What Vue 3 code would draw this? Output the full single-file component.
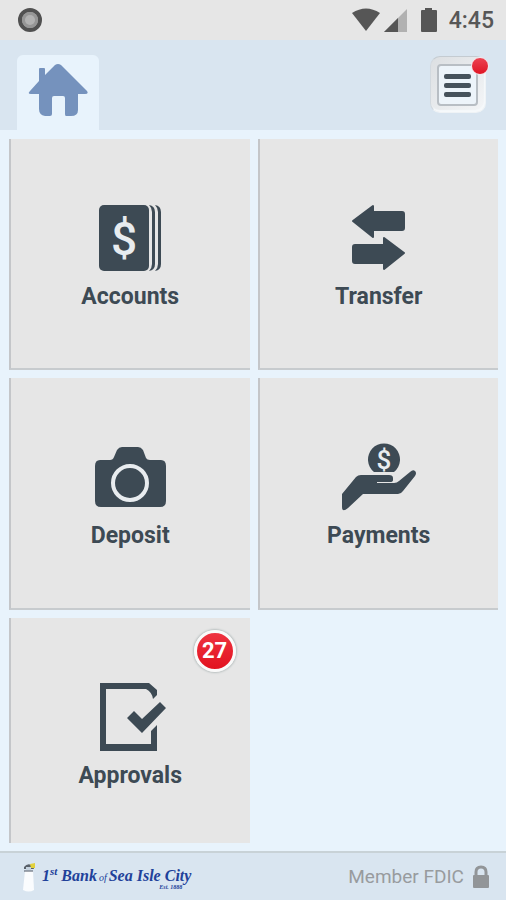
<script setup>
const tiles = [
  { id: 'accounts', label: 'Accounts' },
  { id: 'transfer', label: 'Transfer' },
  { id: 'deposit', label: 'Deposit' },
  { id: 'payments', label: 'Payments' },
  { id: 'approvals', label: 'Approvals', badge: 27 },
]
</script>

<template>
  <div class="page">
    <div class="status">
      <svg width="26" height="26" viewBox="0 0 26 26" aria-hidden="true">
        <circle cx="13" cy="13" r="10" fill="#aaa" stroke="#515151" stroke-width="4" />
        <circle cx="13" cy="13" r="8" fill="#969696" />
        <circle cx="13" cy="13" r="5" fill="#b2b2b2" />
      </svg>
      <div class="status-right">
        <svg width="88" height="26" viewBox="0 0 88 26" aria-hidden="true">
          <path d="M1 6Q15-3 29 6L15 24Z" fill="#565656" />
          <path d="M56 2V25H33Z" fill="#b1b1b1" />
          <path d="M47 11V25H33Z" fill="#565656" />
          <path d="M74 1h7v2h4q1 0 1 1v20q0 1-1 1H71q-1 0-1-1V4q0-1 1-1h3z" fill="#565656" />
        </svg>
        <span class="time">4:45</span>
      </div>
    </div>

    <header class="header">
      <a class="home" href="#" aria-label="Home">
        <svg width="60" height="54" viewBox="0 0 60 54" aria-hidden="true">
          <path d="M27 2Q30 0 33 2L59 28Q61 31 57 31H50V47Q50 53 43 53H38Q37 53 37 51V35Q37 33 35 33H26Q24 33 24 35V51Q24 53 22 53H17Q11 52 11 46V31H3Q-1 31 2 28L11 18V6Q11 5 12 5H16Q17 5 17 6V12Z" fill="#7592bd" />
        </svg>
      </a>
      <button class="menu" type="button" aria-label="Menu">
        <span class="menu-face">
          <span class="bar"></span>
          <span class="bar"></span>
          <span class="bar"></span>
        </span>
        <span class="dot"></span>
      </button>
    </header>

    <main class="grid">
      <button v-for="tile in tiles" :key="tile.id" class="tile" type="button">
        <svg class="icon" viewBox="0 0 80 72" aria-hidden="true">
          <g v-if="tile.id === 'accounts'">
            <rect x="9" y="2" width="50" height="66" rx="5" />
            <path d="M59 2Q65 3 65 9V61Q65 67 59 68Q62 65 62 61V9Q62 5 59 2Z" />
            <path d="M65 2Q71 3 71 9V61Q71 67 65 68Q68 65 68 61V9Q68 5 65 2Z" />
            <text class="dollar" x="34" y="52" font-size="46">$</text>
          </g>
          <g v-else-if="tile.id === 'transfer'" stroke="#3d4a54" stroke-width="2" stroke-linejoin="round">
            <path d="M14 18L34 3V9H63Q65 9 65 11V25Q65 27 63 27H34V34Z" />
            <path d="M65 50L45 66V60H16Q14 60 14 58V44Q14 42 16 42H45V35Z" />
          </g>
          <g v-else-if="tile.id === 'deposit'">
            <path d="M10 18H20Q23 18 24 15L27 8Q29 5 32 5H48Q51 5 53 8L56 16Q57 18 60 18H71Q76 18 76 24V59Q76 65 70 65H11Q5 65 5 59V24Q5 18 10 18Z" />
            <circle cx="40" cy="41" r="17" fill="none" stroke="#e8ecef" stroke-width="4" />
          </g>
          <g v-else-if="tile.id === 'payments'">
            <path d="M35 30A16 16 0 1 1 55 30Z" />
            <text class="dollar" x="45" y="27" font-size="26">$</text>
            <path d="M3 52L17 35Q19 33 22 33H50Q54 33 54 36V38Q54 40 51 40H38V41H55Q58 41 60 39L71 30Q74 27 76 29Q78 31 76 34L64 49Q62 52 59 52H24L9 66Q3 71 3 65Z" />
          </g>
          <g v-else>
            <path d="M10 1H59L67 8V13L63 17Q62 10 56 7H16V62H61V49L67 43V69H10Z" />
            <path d="M37 36L44 29L52 37L70 20L76 26L52 51Z" />
          </g>
        </svg>
        <span class="label">{{ tile.label }}</span>
        <span v-if="tile.badge" class="badge">{{ tile.badge }}</span>
      </button>
    </main>

    <footer class="footer">
      <div class="brand">
        <svg width="14" height="30" viewBox="0 0 14 30" aria-hidden="true">
          <path d="M3 9H11L12 28Q7 31 1 28Z" fill="#fafcfe" />
          <path d="M2 5Q6 0 11 4L12 7H2Z" fill="#59616a" />
          <path d="M8 2L13 1V6H9Z" fill="#e2d13c" />
          <path d="M4 5H9V8H4Z" fill="#c6d3df" />
          <path d="M2 9H11" stroke="#4a5361" stroke-width="1" />
        </svg>
        <span class="brand-name">1<sup>st</sup> Bank<span class="of">of</span>Sea Isle City<small class="est">Est. 1888</small></span>
      </div>
      <div class="member">
        <span>Member FDIC</span>
        <svg width="18" height="24" viewBox="0 0 18 24" aria-hidden="true">
          <path d="M4 12V7Q4 2 9 2T14 7V12" fill="none" stroke="#929598" stroke-width="3" />
          <rect x="1" y="10" width="16" height="13" rx="1" fill="#929598" />
        </svg>
      </div>
    </footer>
  </div>
</template>

<style>
body {
  margin: 0;
  background: #e8f3fc;
}
</style>

<style scoped>
.page {
  display: flex;
  flex-direction: column;
  min-height: 100vh;
  font-family: Roboto, "Liberation Sans", sans-serif;
  background: #e8f3fc;
}
.status {
  display: flex;
  align-items: center;
  justify-content: space-between;
  height: 40px;
  padding: 0 12px 0 17px;
  background: #e6e6e6;
}
.status-right {
  display: flex;
  align-items: center;
  gap: 10px;
}
.time {
  font-size: 23px;
  line-height: 28px;
  padding-top: 2px;
  font-weight: 500;
  color: #575757;
}
.header {
  display: flex;
  align-items: flex-end;
  justify-content: space-between;
  height: 90px;
  padding: 0 20px 0 17px;
  background: #d9e5f0;
}
.home {
  box-sizing: border-box;
  width: 82px;
  height: 75px;
  padding: 8px 11px;
  border-radius: 6px 6px 0 0;
  background: #e8f3fc;
}
.menu {
  position: relative;
  box-sizing: border-box;
  width: 56px;
  height: 57px;
  margin: 0 0 17px;
  padding: 7px 7px 6px 6px;
  border: 1px solid #eff3f6;
  border-top-color: #c4cbd1;
  border-left-color: #d2d9df;
  border-radius: 10px;
  background: linear-gradient(135deg, #dcdfe2, #f4f6f8);
  box-shadow: inset -1px -2px 1px #f6f9fb;
}
.menu-face {
  box-sizing: border-box;
  display: flex;
  flex-direction: column;
  align-items: center;
  justify-content: center;
  gap: 4px;
  height: 100%;
  border: 2px solid #b8bec4;
  border-radius: 4px;
  background: #edf4fa;
}
.bar {
  width: 27px;
  height: 5px;
  border-radius: 2px;
  background: #46525b;
}
.dot {
  position: absolute;
  top: 0;
  right: -4px;
  width: 16px;
  height: 16px;
  border: 1px solid #f5e8ec;
  border-radius: 50%;
  background: linear-gradient(#ec4251, #df1524);
}
.grid {
  flex: 1;
  display: grid;
  grid-template-columns: 1fr 1fr;
  grid-template-rows: 232fr 232fr 226fr;
  gap: 8px;
  padding: 9px 8px 8px 9px;
}
.tile {
  position: relative;
  display: flex;
  flex-direction: column;
  align-items: center;
  gap: 8px;
  margin: 0;
  padding: 64px 0 0;
  border: 0;
  border-left: 2px solid #c4c6c9;
  border-bottom: 2px solid #c7cbce;
  background: #e6e6e6;
  font-family: inherit;
  color: #3d4a54;
}
.tile:last-child {
  border-bottom: 0;
}
.icon {
  width: 80px;
  height: 72px;
  fill: #3d4a54;
}
.dollar {
  fill: #e8ecef;
  stroke: none;
  font-family: Roboto, sans-serif;
  font-weight: 500;
  text-anchor: middle;
}
.label {
  font-size: 23px;
  line-height: 28px;
  font-weight: 700;
}
.badge {
  position: absolute;
  top: 12px;
  right: 14px;
  width: 36px;
  border: 3px solid #fafafa;
  border-radius: 50%;
  background: linear-gradient(#ee3340, #e2121f);
  box-shadow: 0 0 2px 1px #b9c0c0;
  font-size: 22px;
  line-height: 36px;
  font-weight: 700;
  text-align: center;
  color: #fff;
}
.footer {
  display: flex;
  align-items: center;
  justify-content: space-between;
  box-sizing: border-box;
  height: 49px;
  padding: 0 16px 0 22px;
  border-top: 2px solid #c8d2d7;
  background: #d9e5f0;
}
.brand {
  display: flex;
  align-items: center;
  gap: 6px;
}
.brand-name {
  position: relative;
  font: italic bold 16px/24px "Liberation Serif", serif;
  color: #21419a;
  white-space: nowrap;
}
.brand-name sup {
  font-size: 11px;
  line-height: 0;
}
.of {
  padding: 0 2px;
  font-size: 10px;
  font-weight: 400;
}
.est {
  position: absolute;
  right: 9px;
  bottom: -1px;
  font-size: 6px;
  line-height: 8px;
}
.member {
  display: flex;
  align-items: center;
  gap: 8px;
  font-size: 19px;
  line-height: 24px;
  color: #989b9e;
}
</style>
